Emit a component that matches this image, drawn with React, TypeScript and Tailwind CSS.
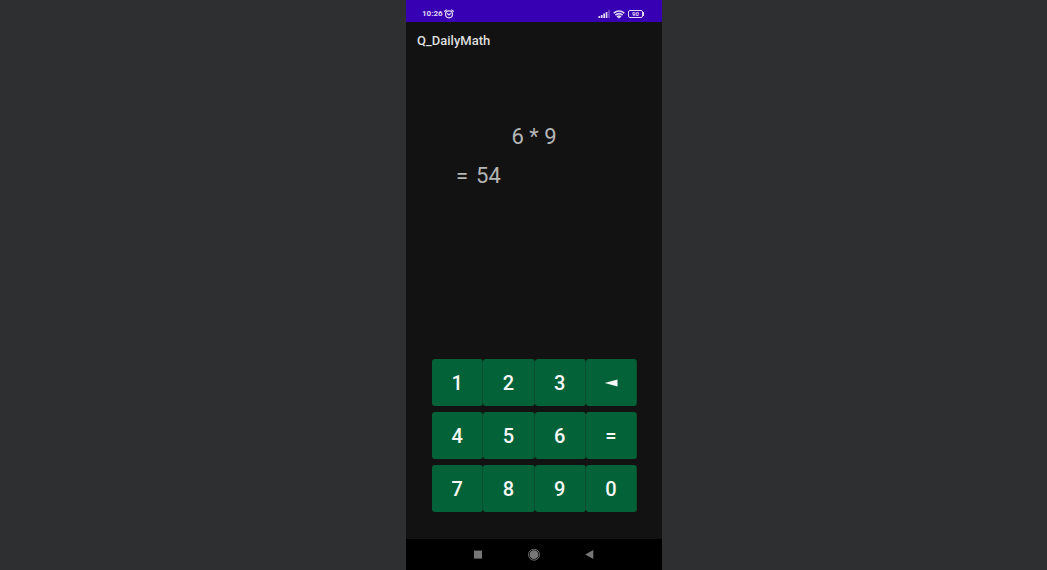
import { useState } from "react";

const rows = [
  ["1", "2", "3", "◄"],
  ["4", "5", "6", "="],
  ["7", "8", "9", "0"],
];

function StatusBar() {
  return (
    <header className="flex h-[22px] items-end justify-between bg-[#3700b3] pr-[18px] pl-4 text-[#e0d8f5]">
      <div className="flex h-4 items-center gap-px">
        <span className="text-[8px] leading-4 font-bold">10:26</span>
        <svg viewBox="0 0 10 10" className="size-[10px]" fill="none" stroke="currentColor" strokeWidth="1.2" strokeLinecap="round" aria-label="Alarm set">
          <circle cx="5" cy="5.3" r="3.5" />
          <path d="M.7 2.3 2.4 .9M9.3 2.3 7.6 .9M3.5 4.7 5 5.9l1.5-1.2" />
        </svg>
      </div>
      <div className="flex h-4 items-center gap-[3px]">
        <svg viewBox="0 0 12 8" className="h-2 w-3" fill="currentColor" aria-label="Signal">
          <path d="M.5 6h1.7v2H.5zM2.9 5h1.7v3H2.9zM5.3 3.6H7V8H5.3zM7.7 2h1.7v6H7.7z" />
          <path d="M10.4 0h1.2v8h-1.2z" opacity=".5" />
        </svg>
        <svg viewBox="0 0 12 9" className="h-[9px] w-3" fill="none" stroke="currentColor" strokeWidth="1.6" aria-label="Wi-Fi">
          <path d="M.7 3.2Q6-1.2 11.3 3.2M2.4 5.2Q6 2 9.6 5.2M4 7Q6 5.2 8 7" />
          <path d="M4.7 7h2.6L6 8.7z" fill="currentColor" stroke="none" />
        </svg>
        <div className="flex items-center" aria-label="Battery">
          <span className="flex h-2 w-[15px] items-center justify-center rounded-[2px] border border-current text-[6px] leading-[6px] font-bold">90</span>
          <span className="h-1 w-px bg-current" />
        </div>
      </div>
    </header>
  );
}

function NavigationBar() {
  return (
    <nav className="flex h-[31px] items-center justify-center gap-11 bg-black text-[#777777]">
      <button type="button" aria-label="Recent apps">
        <svg viewBox="0 0 12 12" className="size-3" fill="currentColor"><path d="M2 1.6h8v8H2z" /></svg>
      </button>
      <button type="button" aria-label="Home">
        <svg viewBox="0 0 12 12" className="size-3" fill="currentColor">
          <circle cx="6" cy="5.7" r="4.4" />
          <circle cx="6" cy="5.7" r="5.5" fill="none" stroke="currentColor" strokeWidth=".9" />
        </svg>
      </button>
      <button type="button" aria-label="Back">
        <svg viewBox="0 0 12 12" className="size-3" fill="currentColor"><path d="M9.3 1.1v9L1.2 5.6z" /></svg>
      </button>
    </nav>
  );
}

export default function App() {
  const [answer, setAnswer] = useState("54");

  const press = (key: string) => {
    if (key === "◄") setAnswer((value) => value.slice(0, -1));
    else if (key !== "=") setAnswer((value) => value + key);
  };

  return (
    <div className="grid min-h-screen grid-cols-[406fr_256px_385fr] bg-[#2e2f31] font-['Roboto',sans-serif]">
      <div className="col-start-2 flex flex-col bg-[#121212]">
        <StatusBar />
        <h1 className="px-[11px] pt-[9px] text-[13px] leading-5 font-medium text-[#dedede]">Q_DailyMath</h1>
        <main className="flex grow flex-col pb-[27px]">
          <div className="grow pt-[66px] text-[22px] leading-[39px] text-[#b5b5b5]">
            <p className="text-center">6 * 9</p>
            <output className="flex gap-2 pl-[50px]">
              <span>=</span>
              <span>{answer}</span>
            </output>
          </div>
          <div className="mr-[25px] ml-[26px] grid grid-cols-4 gap-y-[6px]">
            {rows.flat().map((key) => (
              <button
                key={key}
                type="button"
                onClick={() => press(key)}
                aria-label={key === "◄" ? "Delete" : key}
                className="flex h-[47px] items-center justify-center rounded-[3px] border-r border-[#0b4d2f] bg-[#036238] text-xl font-medium text-[#f7f7f7]"
              >
                {key === "◄" ? (
                  <svg viewBox="0 0 14 8" className="h-2 w-[14px]" fill="currentColor"><path d="M13.5 .5v7L.7 4z" /></svg>
                ) : (
                  key
                )}
              </button>
            ))}
          </div>
        </main>
        <NavigationBar />
      </div>
    </div>
  );
}
